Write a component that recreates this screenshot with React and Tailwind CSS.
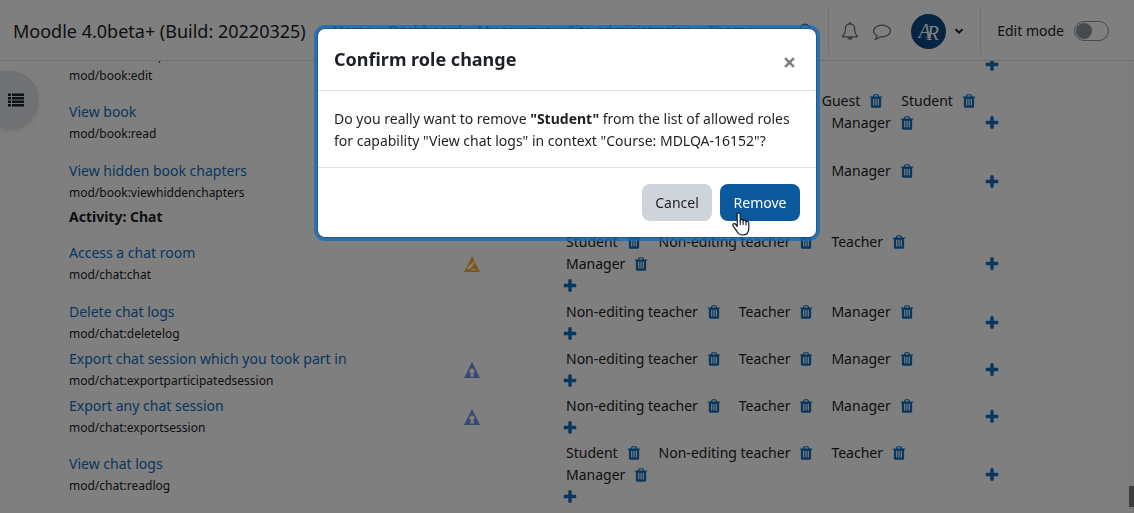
import React from "react";

const TRASH =
  "M704 1376v-704q0-14-9-23t-23-9h-64q-14 0-23 9t-9 23v704q0 14 9 23t23 9h64q14 0 23-9t9-23zm256 0v-704q0-14-9-23t-23-9h-64q-14 0-23 9t-9 23v704q0 14 9 23t23 9h64q14 0 23-9t9-23zm256 0v-704q0-14-9-23t-23-9h-64q-14 0-23 9t-9 23v704q0 14 9 23t23 9h64q14 0 23-9t9-23zm-544-992h448l-48-117q-7-9-17-11h-317q-10 2-17 11zm928 32v64q0 14-9 23t-23 9h-96v948q0 83-47 143.5t-113 60.5h-832q-66 0-113-58.5t-47-141.5v-952h-96q-14 0-23-9t-9-23v-64q0-14 9-23t23-9h309l70-167q15-37 54-63t79-26h320q40 0 79 26t54 63l70 167h309q14 0 23 9t9 23z";
const PLUS =
  "M1600 736v192q0 40-28 68t-68 28h-416v416q0 40-28 68t-68 28h-192q-40 0-68-28t-28-68v-416h-416q-40 0-68-28t-28-68v-192q0-40 28-68t68-28h416v-416q0-40 28-68t68-28h192q40 0 68 28t28 68v416h416q40 0 68 28t28 68z";
const COMMENT =
  "M896 384q-204 0-381.5 69.5t-282 187.5-104.5 255q0 112 71.5 213.5t201.5 175.5l87 50-27 96q-24 91-70 172 152-63 275-171l43-38 57 6q69 8 130 8 204 0 381.5-69.5t282-187.5 104.5-255-104.5-255-282-187.5-381.5-69.5zm896 512q0 174-120 321.5t-326 233-450 85.5q-70 0-145-8-198 175-460 242-49 14-114 22h-5q-15 0-27-10.5t-16-27.5v-1q-3-4-.5-12t2-10 4.5-9.5l6-9 7-8.5 8-9q7-8 31-34.5t34.5-38 31-39.5 32.5-51 27-59 26-76q-157-89-247.5-220t-90.5-281q0-174 120-321.5t326-233 450-85.5 450 85.5 326 233 120 321.5z";
const BELL =
  "M912 1696q0-16-16-16-59 0-101.5-42.5t-42.5-101.5q0-16-16-16t-16 16q0 73 51.5 124.5t124.5 51.5q16 0 16-16zm-666-288h1300q-266-300-266-832 0-51-24-105t-69-103-121.5-80.5-169.5-31.5-169.5 31.5-121.5 80.5-69 103-24 105q0 532-266 832zm1482 0q0 52-38 90t-90 38h-448q0 106-75 181t-181 75-181-75-75-181h-448q-52 0-90-38t-38-90q50-42 91-88t85-119.5 74.5-158.5 50-206 19.5-260q0-152 117-282.5t307-158.5q-8-19-8-39 0-40 28-68t68-28 68 28 28 68q0 20-8 39 190 28 307 158.5t117 282.5q0 139 19.5 260t50 206 74.5 158.5 85 119.5 91 88z";

function Glyph({ d, className }) {
  return (
    <svg viewBox="0 0 1792 1792" fill="currentColor" aria-hidden="true" className={className}>
      <path d={d} />
    </svg>
  );
}

function SpamRisk() {
  return (
    <svg viewBox="0 0 16 16" className="size-4" role="img" aria-label="Spam risk">
      <path d="M8 0.3 16 16H0Z" fill="#ffad33" />
      <path d="M4.400 12.200 7.800 8.900" stroke="#fff" strokeWidth="2.600" strokeLinecap="round" />
      <circle cx="9.600" cy="7" r="1.200" fill="#fff" />
      <path d="M7.200 13.500h4.800" stroke="#fff" strokeWidth="1" />
    </svg>
  );
}

function PrivacyRisk() {
  return (
    <svg viewBox="0 0 16 16" className="size-4" role="img" aria-label="Privacy risk">
      <path d="M8 0 16 16H0Z" fill="#7393e6" />
      <circle cx="8" cy="9" r="2.500" fill="#fff" />
      <path d="M7 10.500H9.200V12.500H9.900V14.600H6.300V12.500H7z" fill="#fff" />
    </svg>
  );
}

const groups = [
  {
    title: null,
    rows: [
      { name: "Edit book chapters", cap: "mod/book:edit", roles: ["Teacher", "Manager"] },
      {
        name: "View book",
        cap: "mod/book:read",
        roles: ["Authenticated user on site home", "Guest", "Student", "Non-editing teacher", "Teacher", "Manager"],
      },
      {
        name: "View hidden book chapters",
        cap: "mod/book:viewhiddenchapters",
        roles: ["Non-editing teacher", "Teacher", "Manager"],
      },
    ],
  },
  {
    title: "Activity: Chat",
    rows: [
      {
        name: "Access a chat room",
        cap: "mod/chat:chat",
        risk: "spam",
        roles: ["Student", "Non-editing teacher", "Teacher", "Manager"],
      },
      { name: "Delete chat logs", cap: "mod/chat:deletelog", roles: ["Non-editing teacher", "Teacher", "Manager"] },
      {
        name: "Export chat session which you took part in",
        cap: "mod/chat:exportparticipatedsession",
        risk: "privacy",
        roles: ["Non-editing teacher", "Teacher", "Manager"],
      },
      {
        name: "Export any chat session",
        cap: "mod/chat:exportsession",
        risk: "privacy",
        roles: ["Non-editing teacher", "Teacher", "Manager"],
      },
      {
        name: "View chat logs",
        cap: "mod/chat:readlog",
        roles: ["Student", "Non-editing teacher", "Teacher", "Manager"],
      },
    ],
  },
];

function AddButton({ label }) {
  return (
    <button type="button" aria-label={label} className="flex h-[22px] items-center text-[#0f6cbf]">
      <Glyph d={PLUS} className="size-4" />
    </button>
  );
}

function CapabilityRow({ row }) {
  const tall = row.roles.length > 3;
  return (
    <tr className={tall ? "h-[70px]" : "h-[47px]"}>
      <th scope="row" className="text-left align-middle font-normal">
        <a href="#capability" className="block text-[#0f6cbf]">
          {row.name}
        </a>
        <span className="block text-xs leading-[22px]">{row.cap}</span>
      </th>
      <td className="align-middle">
        {row.risk === "spam" && <SpamRisk />}
        {row.risk === "privacy" && <PrivacyRisk />}
      </td>
      <td className="align-middle">
        <div className="flex flex-wrap gap-x-[17px] pl-1">
          {row.roles.map((role) => (
            <span key={role} className="flex items-center gap-2 whitespace-nowrap">
              {role}
              <button type="button" aria-label={"Remove " + role} className="text-[#0f6cbf]">
                <Glyph d={TRASH} className="size-4" />
              </button>
            </span>
          ))}
        </div>
        <AddButton label="Allow role" />
      </td>
      <td className="align-middle">
        <AddButton label="Prohibit role" />
      </td>
    </tr>
  );
}

function Header() {
  return (
    <header className="flex h-[61px] shrink-0 items-center border-b border-[#dee2e6] bg-white pt-0.5 pr-[25px] pl-3">
      <a href="#home" className="w-[305px] pl-px text-lg whitespace-nowrap">
        Moodle 4.0beta+ (Build: 20220325)
      </a>
      <nav className="flex items-center gap-4 pl-4 whitespace-nowrap">
        <a href="#home">Home</a>
        <a href="#dashboard">Dashboard</a>
        <a href="#courses">My courses</a>
        <a href="#admin">Site administration</a>
        <a href="#theme">Theme</a>
      </nav>
      <div className="ml-auto flex h-full shrink-0 items-center">
        <button type="button" aria-label="Search" className="mr-3.5 text-[#6a737b]">
          <svg viewBox="0 0 16 16" fill="none" stroke="currentColor" strokeWidth="2" className="size-4">
            <circle cx="7" cy="6.5" r="5" />
            <path d="m10.5 10.5 4 4" />
          </svg>
        </button>
        <div className="flex h-[45px] items-center border-x border-[#dee2e6] pr-4 pl-3">
          <button type="button" aria-label="Notifications" className="text-[#6a737b]">
            <Glyph d={BELL} className="size-[18px]" />
          </button>
          <button type="button" aria-label="Messages" className="ml-3.5 text-[#6a737b]">
            <Glyph d={COMMENT} className="size-[18px]" />
          </button>
          <button type="button" aria-label="User menu" className="ml-5 flex items-center gap-2">
            <span className="flex size-[35px] items-center justify-center rounded-full bg-[#0a4b85] font-['Liberation_Serif',serif] text-xl leading-none text-white italic">
              <span>A</span>
              <span className="-ml-1 pt-1">R</span>
            </span>
            <svg viewBox="0 0 10 10" fill="none" stroke="currentColor" strokeWidth="2" className="size-2.5">
              <path d="M1.500 3.200 5 6.700 8.500 3.200" />
            </svg>
          </button>
        </div>
        <label htmlFor="edit-mode" className="pr-2.5 pl-4 whitespace-nowrap">
          Edit mode
        </label>
        <input
          id="edit-mode"
          type="checkbox"
          role="switch"
          className="h-5 w-[35px] appearance-none rounded-full border border-[#8f959e] bg-white before:m-px before:block before:size-4 before:rounded-full before:bg-[#8f959e]"
        />
      </div>
    </header>
  );
}

function HandCursor() {
  return (
    <svg viewBox="0 0 18 24" className="absolute top-7 left-3 h-6 w-[18px]" aria-hidden="true">
      <path
        d="M5.200 14.500V2.600C5.200 .4 8.200 .4 8.200 2.600V8.600C8.500 6.900 11 7.100 11.100 8.900 11.500 7.600 13.900 7.900 14 9.800 14.600 8.800 16.800 9.200 16.800 11.200V16.200C16.800 20.500 14.300 23 10.800 23 7.600 23 6.300 21.800 4.800 19.200L1 13.800C.1 12 2.500 10.800 3.700 12.400Z"
        fill="#fff"
        stroke="#101828"
        strokeWidth="1.2"
        strokeLinejoin="round"
      />
      <path d="M8.200 8.500v4M11.100 9v3.500M14 10v3" stroke="#101828" strokeWidth="1.100" strokeLinecap="round" />
    </svg>
  );
}

function ConfirmDialog() {
  return (
    <div className="fixed inset-0 z-20 flex items-start justify-center bg-black/50 p-7">
      <section
        role="dialog"
        aria-modal="true"
        aria-labelledby="dialog-title"
        className="w-full max-w-[500px] rounded-lg border border-black/20 bg-white bg-clip-padding ring-3 ring-[#0f6cbf]/75"
      >
        <div className="flex items-start justify-between border-b border-[#dee2e6] px-4 pt-4 pb-[17px]">
          <h2 id="dialog-title" className="text-lg leading-7 font-bold">
            Confirm role change
          </h2>
          <button type="button" aria-label="Close" className="mt-2 px-[5px] py-1 text-[#7f7f7f]">
            <svg viewBox="0 0 10 10" fill="none" stroke="currentColor" strokeWidth="2.400" className="size-[11px]">
              <path d="m1 1 8 8M9 1 1 9" />
            </svg>
          </button>
        </div>
        <p className="px-4 pt-[17px] pb-[15px]">
          Do you really want to remove <strong>&quot;Student&quot;</strong> from the list of allowed roles for
          capability &quot;View chat logs&quot; in context &quot;Course: MDLQA-16152&quot;?
        </p>
        <div className="flex justify-end gap-2 border-t border-[#dee2e6] p-4">
          <button type="button" className="h-[37px] w-[70px] rounded-lg bg-[#ced4da]">
            Cancel
          </button>
          <div className="relative">
            <button type="button" className="h-[37px] w-20 rounded-lg bg-[#0c589c] text-white">
              Remove
            </button>
            <HandCursor />
          </div>
        </div>
      </section>
    </div>
  );
}

export default function App() {
  return (
    <div className="flex h-screen flex-col overflow-hidden bg-white font-['Noto_Sans',sans-serif] text-sm leading-[22px] text-[#1d2125]">
      <Header />
      <div className="flex min-h-0 flex-1 overflow-hidden">
        <aside className="w-[69px] shrink-0 pt-2.5">
          <button
            type="button"
            aria-label="Open course index"
            className="flex h-[57px] w-[39px] items-center rounded-r-full bg-[#dee2e6] pl-2 shadow-md"
          >
            <svg viewBox="0 0 16 14" fill="currentColor" className="h-3.5 w-4" aria-hidden="true">
              <path d="M0 .5h3v2.500H0zM4 .5h12v2.500H4zM0 4h3v2.500H0zM4 4h12v2.500H4zM0 7.500h3V10H0zM4 7.500h12V10H4zM0 11h3v2.500H0zM4 11h12v2.500H4z" />
            </svg>
          </button>
        </aside>
        <main className="-mt-5 min-w-0 flex-1 pr-[60px]">
          <table className="w-full table-fixed border-collapse">
            <colgroup>
              <col className="w-[39.5%]" />
              <col className="w-[9.8%]" />
              <col className="w-[42.2%]" />
              <col />
            </colgroup>
            {groups.map((group) => (
              <tbody key={group.title || "book"}>
                {group.title && (
                  <tr className="h-6">
                    <th colSpan={4} scope="rowgroup" className="text-left align-middle font-bold">
                      {group.title}
                    </th>
                  </tr>
                )}
                {group.rows.map((row) => (
                  <CapabilityRow key={row.cap} row={row} />
                ))}
              </tbody>
            ))}
          </table>
        </main>
        <div className="flex w-[5px] shrink-0 flex-col justify-end bg-[#f8f8f8] pb-1.5" aria-hidden="true">
          <div className="h-[21px] bg-[#767e84]" />
        </div>
      </div>
      <ConfirmDialog />
    </div>
  );
}
